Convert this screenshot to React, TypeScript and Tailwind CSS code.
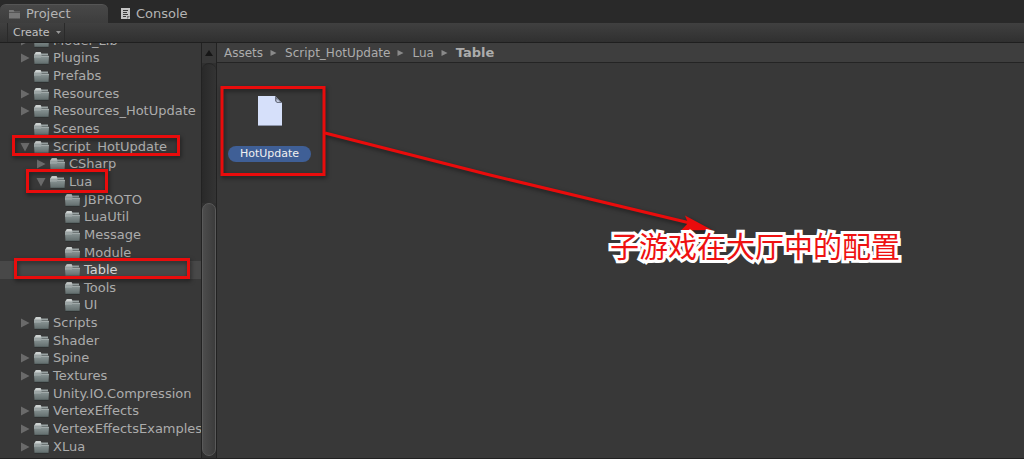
import clsx from "clsx";
import { useState } from "react";

interface Folder {
  name: string;
  level: number;
  state?: "open" | "closed";
}

const folders: Folder[] = [
  { name: "Model_Lib", level: 0, state: "closed" },
  { name: "Plugins", level: 0, state: "closed" },
  { name: "Prefabs", level: 0 },
  { name: "Resources", level: 0, state: "closed" },
  { name: "Resources_HotUpdate", level: 0, state: "closed" },
  { name: "Scenes", level: 0 },
  { name: "Script_HotUpdate", level: 0, state: "open" },
  { name: "CSharp", level: 1, state: "closed" },
  { name: "Lua", level: 1, state: "open" },
  { name: "JBPROTO", level: 2 },
  { name: "LuaUtil", level: 2 },
  { name: "Message", level: 2 },
  { name: "Module", level: 2 },
  { name: "Table", level: 2 },
  { name: "Tools", level: 2 },
  { name: "UI", level: 2 },
  { name: "Scripts", level: 0, state: "closed" },
  { name: "Shader", level: 0 },
  { name: "Spine", level: 0, state: "closed" },
  { name: "Textures", level: 0, state: "closed" },
  { name: "Unity.IO.Compression", level: 0 },
  { name: "VertexEffects", level: 0, state: "closed" },
  { name: "VertexEffectsExamples", level: 0, state: "closed" },
  { name: "XLua", level: 0, state: "closed" },
];

const indents = ["pl-[20px]", "pl-[36px]", "pl-[51px]"];

function FolderIcon() {
  return (
    <svg width="15" height="14" viewBox="0 0 15 14" className="shrink-0">
      <defs>
        <linearGradient id="folder" x1="0" y1="0" x2="0" y2="1">
          <stop offset="0" stopColor="#8b9696" />
          <stop offset="1" stopColor="#626d6d" />
        </linearGradient>
      </defs>
      <path d="M0 3.500 2 1h4.500l1 1.500H14V7H0z" fill="#9aa3a3" />
      <path d="M2 1h4.500l.8 2.500H.5z" fill="#cdd2d1" />
      <path d="M7.500 4.500H14" stroke="#626b6b" fill="none" />
      <path d="M0 5.500h6.500l1-.5H15L14.500 13H.5z" fill="url(#folder)" />
      <path d="M0 6h6.500l1-.7H15" stroke="#b0b8b7" strokeWidth="0.8" fill="none" />
      <path d="M.5 13.300h14" stroke="#2b2f2f" strokeWidth="0.8" />
    </svg>
  );
}

function Foldout({ state }: { state?: "open" | "closed" }) {
  return (
    <svg width="10" height="10" viewBox="0 0 10 10" className="shrink-0" fill="#6a6a6a">
      {state === "closed" && <path d="M1 0.500 9.500 5 1 9.500z" />}
      {state === "open" && <path d="M0.500 1h9L5 9.500z" />}
    </svg>
  );
}

function Tree() {
  const [selected, setSelected] = useState("Table");

  return (
    <nav className="min-w-0 flex-1 overflow-hidden">
      {/* scrolled partway, the first row is cut by the toolbar */}
      <ul className="-mt-[11px] flex h-[441px] flex-col">
        {folders.map((folder) => (
          <li key={folder.name} className="min-h-0 flex-1">
            <button
              type="button"
              onClick={() => setSelected(folder.name)}
              className={clsx(
                "flex h-full w-full items-center gap-1 whitespace-nowrap",
                indents[folder.level],
                selected === folder.name
                  ? "bg-[#484848] text-[#d6d6d6]"
                  : "text-[#acacac]"
              )}
            >
              <Foldout state={folder.state} />
              <FolderIcon />
              <span>{folder.name}</span>
            </button>
          </li>
        ))}
        <li className="flex min-h-0 flex-1 items-center gap-1 pl-[5px] text-[#acacac]">
          <Foldout state="closed" />
          <FolderIcon />
          <span>Standard</span>
        </li>
      </ul>
    </nav>
  );
}

function ScrollBar() {
  return (
    <div className="flex w-4 shrink-0 flex-col border-x border-[#222222] bg-[#303030]">
      <button
        type="button"
        aria-label="Scroll up"
        className="flex h-5 items-center justify-center bg-[#383838]"
      >
        <svg width="8" height="6" viewBox="0 0 8 6" fill="#161616">
          <path d="M4 0 8 6H0z" />
        </svg>
      </button>
      <div className="flex-[140] rounded-t-lg border-t border-[#252525] bg-gradient-to-r from-[#292929] to-[#343434]" />
      <div className="mb-[2px] flex-[252] rounded-lg border border-[#5a5a5a] bg-gradient-to-r from-[#4c4c4c] to-[#3c3c3c]" />
    </div>
  );
}

function Breadcrumb() {
  return (
    <div className="flex h-5 shrink-0 items-center gap-2 border-b border-[#242424] bg-[#3e3e3e] pl-[7px] text-[12px] text-[#acacac]">
      {["Assets", "Script_HotUpdate", "Lua"].map((name) => (
        <span key={name} className="flex items-center gap-[7px]">
          <a href="#">{name}</a>
          <svg width="7" height="6" viewBox="0 0 7 6" fill="#8a8a8a">
            <path d="M0.500 0 6.500 3 0.500 6z" />
          </svg>
        </span>
      ))}
      <a href="#" className="text-[13px] font-bold">
        Table
      </a>
    </div>
  );
}

function FileItem() {
  return (
    <button
      type="button"
      className="ml-[11px] mt-[33px] flex w-[83px] flex-col items-center gap-5"
    >
      <svg width="26" height="30" viewBox="0 0 26 30">
        <path d="M1 0h17l7 7v22H1z" fill="#d6e0fa" />
        <path d="M1 29.500h24" stroke="#8d95aa" />
        <path d="M18 0l7 7h-5l-2-2z" fill="#6b7181" />
        <path d="M19 3.500h2l2 2.500h-3z" fill="#c1c9dd" />
      </svg>
      <span className="h-4 w-full rounded-full bg-[#3f5f96] text-center text-[11px] leading-4 text-[#f0f0f0]">
        HotUpdate
      </span>
    </button>
  );
}

function Annotations() {
  return (
    <div className="pointer-events-none absolute inset-0">
      <svg
        width="1024"
        height="459"
        viewBox="0 0 1024 459"
        className="absolute left-0 top-0 drop-shadow-[1px_2px_2px_rgba(0,0,0,0.5)]"
      >
        <g fill="none" stroke="#e90c0c" strokeWidth="3">
          <rect x="13.500" y="136.500" width="165" height="18" />
          <rect x="27.500" y="170.500" width="79" height="21" />
          <rect x="15.500" y="259.500" width="173" height="18" />
          <rect x="222" y="87.500" width="102" height="87" />
          <path d="M325 133 490 175 690 223" />
        </g>
        <path d="M685 215.500 712 230 681 230.500 688 223z" fill="#e90c0c" />
      </svg>
      <p className="absolute left-[610px] top-[224px] whitespace-nowrap font-['Noto_Sans_CJK_SC',sans-serif] text-[29px] leading-[42px] text-[#ee1111] [-webkit-text-stroke:6px_white] [paint-order:stroke_fill] [stroke-linejoin:round]">
        子游戏在大厅中的配置
      </p>
    </div>
  );
}

export default function App() {
  return (
    <div className="relative flex h-screen flex-col overflow-hidden bg-[#383838] font-['DejaVu_Sans',sans-serif] text-[13px] leading-4 text-[#b4b4b4]">
      <header className="flex h-[23px] shrink-0 items-end bg-[#292929]">
        <button
          type="button"
          className="flex h-[19px] w-[108px] items-center gap-[5px] rounded-t-md border-t border-[#555555] bg-gradient-to-b from-[#484848] to-[#3d3d3d] pl-[9px]"
        >
          <svg width="12" height="10" viewBox="0 0 12 10" fill="#777777">
            <path d="M0 1h4.500l1 1.500H11V9.500H0z" />
            <path d="M0 3.500h11" stroke="#555555" />
          </svg>
          Project
        </button>
        <button type="button" className="flex h-[19px] items-center gap-[6px] pl-[13px]">
          <svg width="9" height="11" viewBox="0 0 9 11">
            <path d="M0 0h9v11H0z" fill="#c4c4c4" />
            <path d="M2 2.500h5M2 4.500h4M2 6.500h5M2 8.500h3" stroke="#3a3a3a" />
            <path d="M6 11V8h3z" fill="#777777" />
          </svg>
          Console
        </button>
      </header>
      <div className="flex h-5 shrink-0 border-b border-[#1f1f1f] bg-gradient-to-b from-[#404040] to-[#303030] pl-[7px]">
        <button
          type="button"
          className="flex w-[58px] items-center gap-[6px] border-x border-[#2a2a2a] pl-[5px] text-[11px] text-[#c0c0c0]"
        >
          Create
          <svg width="5" height="3" viewBox="0 0 5 3" fill="#999999">
            <path d="M0 0h5L2.500 3z" />
          </svg>
        </button>
      </div>
      <div className="flex min-h-0 flex-1 border-b border-[#222222]">
        <div className="flex w-[217px] shrink-0">
          <Tree />
          <ScrollBar />
        </div>
        <main className="flex min-w-0 flex-1 flex-col items-stretch">
          <Breadcrumb />
          <FileItem />
        </main>
      </div>
      <Annotations />
    </div>
  );
}
